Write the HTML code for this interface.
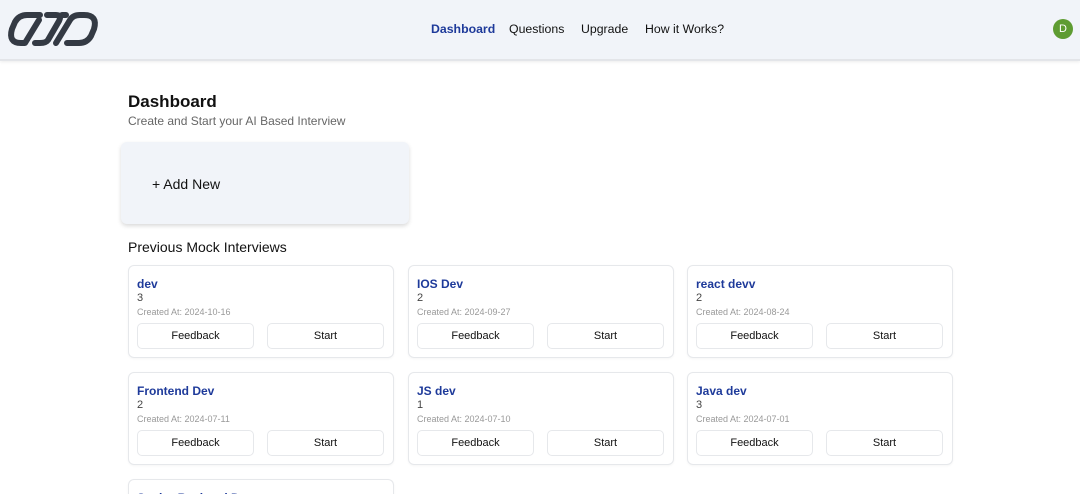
<!DOCTYPE html>
<html><head><meta charset="utf-8"><style>
*{box-sizing:border-box;margin:0;padding:0}
html,body{width:1080px;height:494px;overflow:hidden}
body{background:#fff;font-family:"Liberation Sans",Arial,sans-serif;color:#111;position:relative}
.hdr{position:absolute;left:0;top:0;width:1080px;height:61px;background:#f1f4f9;border-bottom:2px solid #e3e5e9;box-shadow:0 1px 3px rgba(0,0,0,.08)}
.nav{position:absolute;top:22px;font-size:12.3px;color:#111}
.av{position:absolute;left:1053px;top:19px;width:20px;height:20px;border-radius:50%;background:#5e9c32;color:#fff;font-size:11px;text-align:center;line-height:20px}
h1{position:absolute;left:128px;top:92px;font-size:17px;font-weight:bold}
.sub{position:absolute;left:128px;top:114px;font-size:12px;color:#666}
.add{position:absolute;left:121px;top:142px;width:288px;height:82px;background:#f1f4f9;border-radius:6px;box-shadow:0 2px 4px rgba(0,0,0,.15);font-size:14px;padding:34px 0 0 31px}
.prev{position:absolute;left:128px;top:239px;font-size:14px}
.card{position:absolute;width:266px;height:93px;border:1px solid #e6e8eb;border-radius:6px;box-shadow:0 1px 2px rgba(0,0,0,.04)}
.t{position:absolute;left:8px;top:11px;font-size:12px;font-weight:bold;color:#1e3a9a}
.n{position:absolute;left:8px;top:26px;font-size:11px;color:#444}
.d{position:absolute;left:8px;top:41px;font-size:9px;color:#999}
.b{position:absolute;top:57px;width:117px;height:26px;border:1px solid #e6e8eb;border-radius:5px;font-size:11px;text-align:center;line-height:24px}
</style></head><body>
<div class="hdr">
<svg style="position:absolute;left:0;top:0" width="110" height="60" viewBox="0 0 110 60" fill="none" stroke="#343a44" stroke-width="6" stroke-linecap="round" stroke-linejoin="round">
<path d="M40 15 H27 Q19 15 15 22 L12 29 Q8 43 21 43 H25 L39 20"/>
<path d="M47 15 H56 Q62 15 59 21 L48 40 Q46 43 40 43 H35"/>
<path d="M56 43 L70 20 Q73 15 80 15 H84 Q98 15 94 29 L91 36 Q87 43 79 43 H67"/>
<path d="M62 15 H66"/>
</svg>
<div class="nav" style="left:431px;color:#1e3a9a;font-weight:bold">Dashboard</div>
<div class="nav" style="left:509px">Questions</div>
<div class="nav" style="left:581px">Upgrade</div>
<div class="nav" style="left:645px">How it Works?</div>
<div class="av">D</div>
</div>
<h1>Dashboard</h1>
<div class="sub">Create and Start your AI Based Interview</div>
<div class="add">+ Add New</div>
<div class="prev">Previous Mock Interviews</div>

<div class="card" style="left:128px;top:265px"><div class="t">dev</div><div class="n">3</div><div class="d">Created At: 2024-10-16</div><div class="b" style="left:8px">Feedback</div><div class="b" style="left:138px">Start</div></div>
<div class="card" style="left:408px;top:265px"><div class="t">IOS Dev</div><div class="n">2</div><div class="d">Created At: 2024-09-27</div><div class="b" style="left:8px">Feedback</div><div class="b" style="left:138px">Start</div></div>
<div class="card" style="left:687px;top:265px"><div class="t">react devv</div><div class="n">2</div><div class="d">Created At: 2024-08-24</div><div class="b" style="left:8px">Feedback</div><div class="b" style="left:138px">Start</div></div>
<div class="card" style="left:128px;top:372px"><div class="t">Frontend Dev</div><div class="n">2</div><div class="d">Created At: 2024-07-11</div><div class="b" style="left:8px">Feedback</div><div class="b" style="left:138px">Start</div></div>
<div class="card" style="left:408px;top:372px"><div class="t">JS dev</div><div class="n">1</div><div class="d">Created At: 2024-07-10</div><div class="b" style="left:8px">Feedback</div><div class="b" style="left:138px">Start</div></div>
<div class="card" style="left:687px;top:372px"><div class="t">Java dev</div><div class="n">3</div><div class="d">Created At: 2024-07-01</div><div class="b" style="left:8px">Feedback</div><div class="b" style="left:138px">Start</div></div>
<div class="card" style="left:128px;top:479px;height:15px;overflow:hidden;border-bottom:none;border-radius:6px 6px 0 0"><div class="t">Senior Backend Dev</div></div>
</body></html>
